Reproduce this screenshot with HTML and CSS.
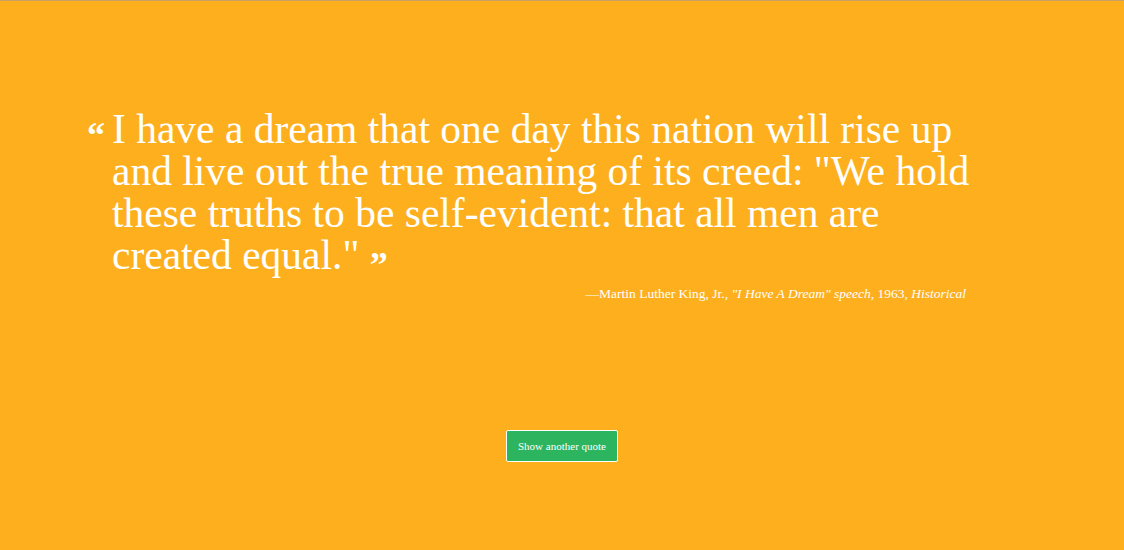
FILE: index.html
```html
<!DOCTYPE html>
<html>
<head>
<meta charset="utf-8">
<link rel="stylesheet" href="styles.css">
</head>
<body>
<div class="page">
  <figure class="quote">
    <blockquote class="quote-body">
      <span class="mark mark-open">&#8220;</span><p class="quote-text">I have a dream that one day this nation will rise up and live out the true meaning of its creed: "We hold these truths to be self-evident: that all men are created equal."&nbsp;<span class="mark mark-close">&#8221;</span></p>
    </blockquote>
    <figcaption class="source">&mdash;Martin Luther King, Jr., <em>"I Have A Dream" speech</em>, 1963, <em>Historical</em></figcaption>
  </figure>
  <div class="actions">
    <button class="btn">Show another quote</button>
  </div>
</div>
</body>
</html>
```
FILE: styles.css
```css
html, body {
  margin: 0;
  padding: 0;
  height: 100%;
}
body {
  background: #feaf1d;
  border-top: 1px solid #c9a066;
  box-sizing: border-box;
  color: #fff;
  font-family: "Liberation Serif", "Times New Roman", serif;
}
.page {
  padding: 107px 150px 0 87px;
}
.quote {
  margin: 0;
}
.quote-body {
  margin: 0;
  display: flex;
  align-items: flex-start;
}
.mark {
  font-weight: bold;
  font-size: 36px;
}
.mark-open {
  width: 25px;
  flex: none;
  line-height: 1;
  margin-top: 9px;
}
.mark-close {
  line-height: 20px;
  vertical-align: -8px;
}
.quote-text {
  margin: 0;
  font-size: 41.5px;
  line-height: 42px;
}
.source {
  text-align: right;
  font-size: 13.5px;
  margin-top: 10px;
  margin-right: 8px;
}
.actions {
  display: flex;
  justify-content: center;
  padding-left: 63px;
  margin-top: 128px;
}
.btn {
  background: #2db45f;
  color: #fff;
  border: 1px solid #fff;
  border-radius: 2px;
  font-family: "Liberation Serif", serif;
  font-size: 11px;
  width: 112px;
  height: 32px;
  padding: 0;
}
```
